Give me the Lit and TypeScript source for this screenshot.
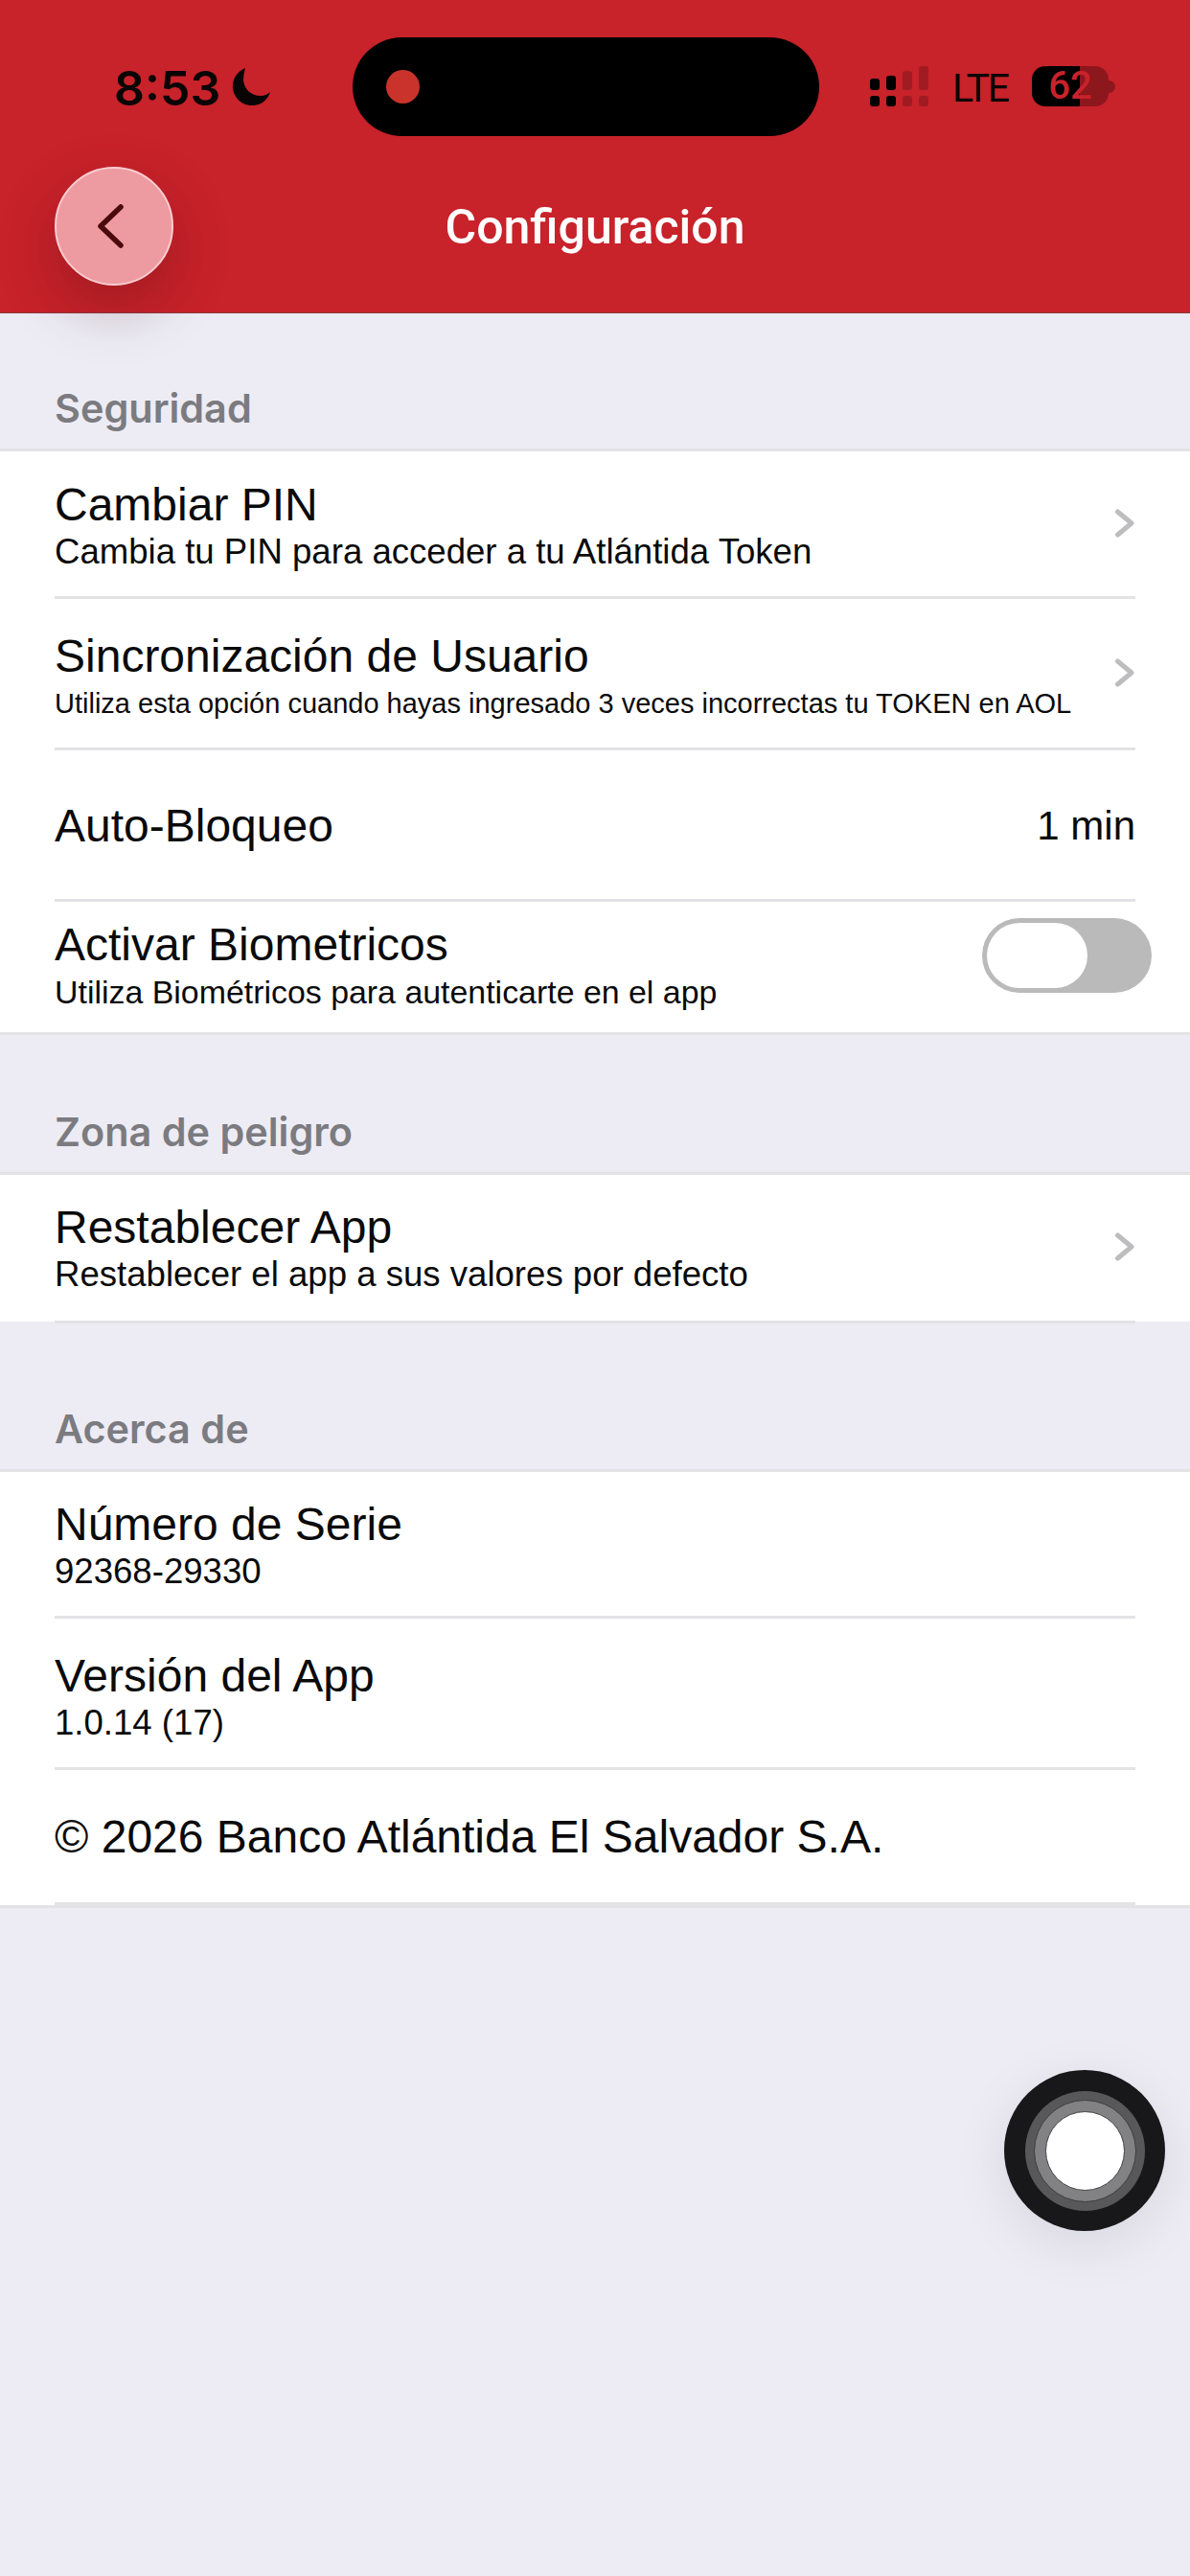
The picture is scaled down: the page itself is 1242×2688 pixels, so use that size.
import { LitElement, html, css, nothing } from 'lit';
import { customElement } from 'lit/decorators.js';

interface Row {
  title: string;
  sub?: string;
  small?: boolean;
  chevron?: boolean;
  value?: string;
  toggle?: boolean;
  size: string;
}

interface Section {
  label: string;
  cls: string;
  rows: Row[];
}

const sections: Section[] = [
  {
    label: 'Seguridad',
    cls: 'sec-a',
    rows: [
      { title: 'Cambiar PIN', sub: 'Cambia tu PIN para acceder a tu Atlántida Token', chevron: true, size: 'first' },
      { title: 'Sincronización de Usuario', sub: 'Utiliza esta opción cuando hayas ingresado 3 veces incorrectas tu TOKEN en AOL', small: true, chevron: true, size: 'std' },
      { title: 'Auto-Bloqueo', value: '1 min', size: 'std plain' },
      { title: 'Activar Biometricos', sub: 'Utiliza Biométricos para autenticarte en el app', toggle: true, size: 'bio' },
    ],
  },
  {
    label: 'Zona de peligro',
    cls: 'sec-b',
    rows: [
      { title: 'Restablecer App', sub: 'Restablecer el app a sus valores por defecto', chevron: true, size: 'single' },
    ],
  },
  {
    label: 'Acerca de',
    cls: 'sec-c',
    rows: [
      { title: 'Número de Serie', sub: '92368-29330', size: 'first' },
      { title: 'Versión del App', sub: '1.0.14 (17)', size: 'std' },
      { title: '© 2026 Banco Atlántida El Salvador S.A.', size: 'last plain' },
    ],
  },
];

@customElement('app-root')
export class AppRoot extends LitElement {
  static styles = css`
    :host {
      display: block;
      position: relative;
      width: 1242px;
      height: 2688px;
      background: #edecf5;
      overflow: hidden;
      font-family: 'Liberation Sans', Arial, sans-serif;
      color: #0a0a0a;
    }
    .header {
      height: 326px;
      background: #c8222a;
      border-bottom: 1px solid #8f3a40;
      display: flex;
      flex-direction: column;
    }
    .status {
      display: flex;
      align-items: flex-start;
      padding: 39px 0 0 119px;
      height: 103px;
    }
    .time {
      font-family: Inter, sans-serif;
      font-weight: 600;
      font-size: 50px;
      line-height: 52px;
      margin-top: 27px;
      width: 123px;
      color: #0a0505;
    }
    .moon {
      width: 42px;
      height: 42px;
      margin-top: 31px;
    }
    .island {
      width: 487px;
      height: 103px;
      margin-left: 84px;
      border-radius: 52px;
      background: #000;
      display: flex;
      align-items: center;
      padding-left: 35px;
      box-sizing: border-box;
    }
    .island-dot {
      width: 35px;
      height: 35px;
      border-radius: 50%;
      background: #c9332b;
    }
    .signal {
      width: 62px;
      height: 42px;
      margin: 30px 0 0 53px;
    }
    .lte {
      font-family: Roboto, sans-serif;
      font-weight: 400;
      font-size: 41px;
      line-height: 42px;
      letter-spacing: -2.2px;
      margin: 32px 0 0 24px;
      width: 58px;
      color: #0a0505;
    }
    .battery {
      position: relative;
      width: 80px;
      height: 42px;
      margin: 30px 0 0 25px;
      border-radius: 14px;
      background: linear-gradient(90deg, #000 62%, #8c171c 62%);
      color: #c8222a;
      font-family: Roboto, sans-serif;
      font-weight: 500;
      font-size: 40px;
      line-height: 42px;
      text-align: center;
    }
    .battery::after {
      content: '';
      position: absolute;
      left: 80px;
      top: 15px;
      width: 7px;
      height: 13px;
      border-radius: 0 7px 7px 0;
      background: #8c171c;
    }
    .nav {
      flex: 1;
      display: flex;
      align-items: center;
      justify-content: center;
      padding-top: 5px;
    }
    .nav-title {
      font-family: Roboto, sans-serif;
      font-weight: 500;
      font-size: 50px;
      color: #fff;
    }
    .back {
      position: absolute;
      left: 57px;
      top: 174px;
      width: 124px;
      height: 124px;
      box-sizing: border-box;
      border-radius: 50%;
      background: #ee9aa1;
      border: 2px solid #f8cdd0;
      box-shadow: 0 24px 60px rgba(60, 10, 15, 0.28);
      display: flex;
      align-items: center;
      justify-content: center;
    }
    .back svg {
      margin-right: 7px;
    }
    .section-label {
      font-family: Inter, sans-serif;
      font-weight: 600;
      font-size: 41.4px;
      line-height: 50px;
      color: #7b7b80;
      padding-left: 57px;
      padding-bottom: 17px;
    }
    .sec-a .section-label { padding-top: 74px; }
    .sec-b .section-label { padding-top: 76px; }
    .sec-c .section-label { padding-top: 85px; }
    .group {
      background: #fff;
      border-top: 3px solid #e3e3e6;
    }
    .sec-a .group,
    .sec-c .group {
      border-bottom: 3px solid #e3e3e6;
    }
    .sec-b .group {
      background: linear-gradient(#fff calc(100% - 2px), transparent 0);
    }
    .row {
      padding: 0 57px;
      box-sizing: border-box;
    }
    .row-inner {
      display: flex;
      align-items: center;
      justify-content: space-between;
      height: 100%;
      box-sizing: border-box;
      border-bottom: 3px solid #e3e3e6;
    }
    .first { height: 154px; }
    .sec-c .first { height: 153px; }
    .std { height: 158px; }
    .bio { height: 136px; }
    .single { height: 155px; }
    .last { height: 141px; }
    .bio .row-inner { border-bottom: none; }
    .text {
      display: flex;
      flex-direction: column;
      gap: 3px;
      padding-top: 3px;
    }
    .std .text { padding-top: 7px; }
    .single .text { padding-top: 1px; }
    .bio .text { padding: 0 0 3px; }
    .plain .text { padding-top: 2px; }
    .title {
      font-size: 48px;
      line-height: 52px;
    }
    .sub {
      font-size: 36.6px;
      line-height: 40px;
    }
    .sub.small {
      font-size: 29px;
    }
    .bio .sub {
      font-size: 33.9px;
    }
    .value {
      font-size: 42px;
      padding-top: 2px;
    }
    .chev {
      width: 22px;
      height: 34px;
      flex: none;
      margin-bottom: 2px;
    }
    .toggle {
      width: 177px;
      height: 78px;
      margin: 0 -17px 24px 0;
      border-radius: 39px;
      background: #bababa;
      padding: 5px;
      box-sizing: border-box;
      flex: none;
    }
    .knob {
      width: 105px;
      height: 68px;
      border-radius: 34px;
      background: #fff;
    }
    .assist {
      position: absolute;
      left: 1048px;
      top: 2160px;
      width: 168px;
      height: 168px;
      border-radius: 50%;
      background: #18181a;
      box-shadow: 0 14px 60px rgba(0, 0, 0, 0.09);
      display: flex;
      align-items: center;
      justify-content: center;
    }
    .ring-a,
    .ring-b,
    .ring-c {
      border-radius: 50%;
      display: flex;
      align-items: center;
      justify-content: center;
      box-sizing: border-box;
    }
    .ring-a {
      width: 125px;
      height: 125px;
      background: #58585a;
    }
    .ring-b {
      width: 107px;
      height: 107px;
      background: #828284;
      border: 1px solid #3c3c3e;
    }
    .ring-c {
      width: 83px;
      height: 83px;
      background: #fff;
      border: 1px solid #444;
    }
  `;

  private renderRow(row: Row) {
    return html`
      <div class="row ${row.size}">
        <div class="row-inner">
          <div class="text">
            <span class="title">${row.title}</span>
            ${row.sub ? html`<span class="sub ${row.small ? 'small' : ''}">${row.sub}</span>` : nothing}
          </div>
          ${row.value ? html`<span class="value">${row.value}</span>` : nothing}
          ${row.chevron
            ? html`<svg class="chev" viewBox="0 0 22 34"><path d="M3.5 5 L18 17 L3.5 29" fill="none" stroke="#bdbdbf" stroke-width="5" stroke-linecap="round" stroke-linejoin="round"/></svg>`
            : nothing}
          ${row.toggle ? html`<div class="toggle"><div class="knob"></div></div>` : nothing}
        </div>
      </div>
    `;
  }

  render() {
    return html`
      <div class="header">
        <div class="status">
          <span class="time">8:53</span>
          <svg class="moon" viewBox="0 0 42 42"><path d="M14 1 C5 5 0 13 1 22 C2 33 12 41 23 40 C31 39 37 35 40 26 C38 28 34 30 30 30 C20 30 13 23 12 14 C12 9 13 5 14 1 Z" fill="#0a0505"/></svg>
          <div class="island"><div class="island-dot"></div></div>
          <svg class="signal" viewBox="0 0 62 42">
            <g fill="#000">
              <rect x="0" y="13" width="10" height="12" rx="3"/>
              <rect x="17" y="10" width="10" height="15" rx="3"/>
              <rect x="0" y="31" width="10" height="11" rx="3"/>
              <rect x="17" y="31" width="10" height="11" rx="3"/>
            </g>
            <g fill="#a01c22">
              <rect x="34" y="5" width="10" height="20" rx="3"/>
              <rect x="51" y="0" width="10" height="25" rx="3"/>
              <rect x="34" y="31" width="10" height="11" rx="3"/>
              <rect x="51" y="31" width="10" height="11" rx="3"/>
            </g>
          </svg>
          <span class="lte">LTE</span>
          <div class="battery">62</div>
        </div>
        <div class="nav"><span class="nav-title">Configuración</span></div>
      </div>
      <div class="back">
        <svg width="27" height="46" viewBox="0 0 27 46"><path d="M24 3 L3 23 L24 43" fill="none" stroke="#4a0a0e" stroke-width="5.5" stroke-linecap="round" stroke-linejoin="round"/></svg>
      </div>
      ${sections.map(
        (s) => html`
          <section class=${s.cls}>
            <div class="section-label">${s.label}</div>
            <div class="group">${s.rows.map((r) => this.renderRow(r))}</div>
          </section>
        `
      )}
      <div class="assist">
        <div class="ring-a"><div class="ring-b"><div class="ring-c"></div></div></div>
      </div>
    `;
  }
}
